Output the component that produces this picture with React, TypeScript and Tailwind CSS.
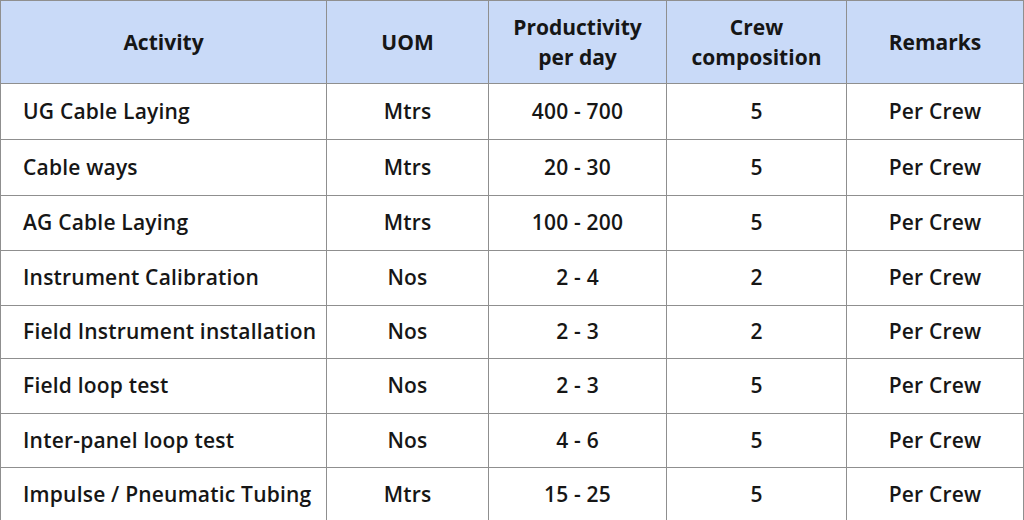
const rows = [
  ["UG Cable Laying", "Mtrs", "400 - 700", "5", "Per Crew"],
  ["Cable ways", "Mtrs", "20 - 30", "5", "Per Crew"],
  ["AG Cable Laying", "Mtrs", "100 - 200", "5", "Per Crew"],
  ["Instrument Calibration", "Nos", "2 - 4", "2", "Per Crew"],
  ["Field Instrument installation", "Nos", "2 - 3", "2", "Per Crew"],
  ["Field loop test", "Nos", "2 - 3", "5", "Per Crew"],
  ["Inter-panel loop test", "Nos", "4 - 6", "5", "Per Crew"],
  ["Impulse / Pneumatic Tubing", "Mtrs", "15 - 25", "5", "Per Crew"],
];

const heights = ["h-[56px]", "h-[56px]", "h-[55px]", "h-[55px]", "h-[53px]", "h-[55px]", "h-[54px]", "h-[54px]"];

export default function App() {
  return (
    <div className="h-[520px] w-[1024px] overflow-hidden bg-white font-['Open_Sans','Noto_Sans',sans-serif] text-[#161616]">
      <table className="w-[1023px] table-fixed border-collapse">
        <colgroup>
          <col className="w-[326px]" />
          <col className="w-[162px]" />
          <col className="w-[178px]" />
          <col className="w-[180px]" />
          <col className="w-[177px]" />
        </colgroup>
        <thead>
          <tr className="h-[83px] bg-[#c9daf8] text-[21px] font-semibold leading-[30px]">
            <th className="border border-[#8f8f8f] text-center">Activity</th>
            <th className="border border-[#8f8f8f] text-center">UOM</th>
            <th className="border border-[#8f8f8f] text-center">
              Productivity
              <br />
              per day
            </th>
            <th className="border border-[#8f8f8f] text-center">
              Crew
              <br />
              composition
            </th>
            <th className="border border-[#8f8f8f] text-center">Remarks</th>
          </tr>
        </thead>
        <tbody>
          {rows.map((r, i) => (
            <tr key={r[0]} className={`${heights[i]} text-[21px] font-semibold tracking-[0.2px]`}>
              <td className="border border-[#8f8f8f] pl-[22px] text-left">{r[0]}</td>
              {r.slice(1).map((c, j) => (
                <td key={j} className="border border-[#8f8f8f] text-center">
                  {c}
                </td>
              ))}
            </tr>
          ))}
        </tbody>
      </table>
    </div>
  );
}
